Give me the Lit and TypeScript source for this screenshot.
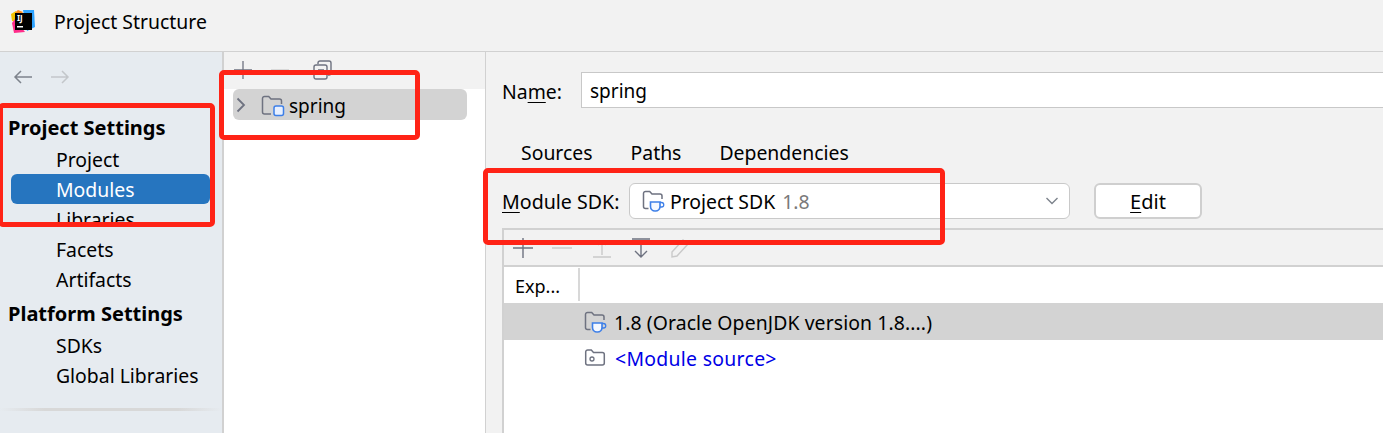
import { LitElement, html, css } from "lit";
import { customElement } from "lit/decorators.js";

const cupIcon = html`<svg class="ico" width="23" height="22" viewBox="0 0 23 22">
  <path d="M6.500 18.500H3.500a2 2 0 0 1-2-2V3.500a2 2 0 0 1 2-2h4.200l2.300 2.500h8a2 2 0 0 1 2 2V9" fill="none" stroke="#6e7280" stroke-width="1.500"/>
  <path d="M8.500 12h9.500v4.500a4.500 4.500 0 0 1-4.500 4.500h-.5a4.500 4.500 0 0 1-4.500-4.500z" fill="#f4f8ff" stroke="#3d7fe8" stroke-width="1.600"/>
  <path d="M18 12.500h1.500a1.700 1.700 0 0 1 0 4.500H18" fill="none" stroke="#3d7fe8" stroke-width="1.300"/>
</svg>`;

@customElement("app-root")
export class AppRoot extends LitElement {
  static styles = css`
    :host { display: block; width: 1383px; height: 433px; overflow: hidden; position: relative;
      font-family: "Noto Sans", "Open Sans", sans-serif; font-size: 19.4px; color: #000; background: #f2f2f2; }
    .ico { display: block; flex: none; }
    .title { height: 51px; border-bottom: 1px solid #d1d1d1; display: flex; align-items: center; padding-left: 11px; gap: 19px; }
    .title span { position: relative; top: -4px; }
    .title svg { position: relative; top: -5px; }
    .body { display: grid; grid-template-columns: 222px 2px 261px 1px 1fr; height: 381px; }
    .side { background: #e6ebf0; padding-top: 10px; display: flex; flex-direction: column; }
    .nav { display: flex; gap: 17px; padding-left: 13px; height: 32px; align-items: center; }
    .nav svg { position: relative; top: -1px; }
    .group { font-weight: 700; font-size: 20px; height: 33px; line-height: 34px; padding-left: 8px; margin-top: 3px; }
    .g1 { margin-top: 17px; }
    .item { height: 30px; line-height: 32px; padding-left: 56px; }
    .item.sel { margin: 0 12px 0 11px; padding-left: 45px; background: #2675bf; color: #fff; border-radius: 6px; }
    .sep { height: 3px; margin-top: 18px; background: linear-gradient(90deg, #e6ebf0, #d8d8d8 20%, #d8d8d8 80%, #e6ebf0); }
    .vline { background: #d1d1d1; }
    .mid { background: #fff; display: flex; flex-direction: column; }
    .midbar { height: 37px; background: #f2f2f2; display: flex; align-items: flex-start; padding: 8px 0 0 9px; box-sizing: border-box; gap: 17px; }
    .midbar .copy { margin-left: 6px; }
    .row { margin: 0 18px 0 9px; height: 31px; background: #d3d3d3; border-radius: 6px; display: flex; align-items: center; }
    .row .folder { margin-left: 12px; position: relative; top: 1px; }
    .row .label { margin-left: 4px; font-size: 19px; position: relative; top: 1px; }
    .main { padding: 20px 0 0 16px; display: flex; flex-direction: column; overflow: hidden; }
    .name { display: flex; align-items: center; height: 36px; gap: 20px; }
    .lab { width: 59px; white-space: nowrap; padding-top: 2px; }
    u { text-underline-offset: 3px; text-decoration-thickness: 1px; }
    .input { flex: 1; height: 36px; background: #fff; border: 1px solid #c8c8c8; border-right: none; box-sizing: border-box; padding: 1px 0 0 8px; line-height: 34px; font-size: 19px; }
    .tabs { display: flex; gap: 38px; height: 40px; margin: 24px 0 11px; padding-left: 19px; align-items: center; }
    .sdk { display: flex; align-items: center; height: 36px; gap: 8px; }
    .sdk-lab { white-space: nowrap; width: 119px; flex: none; font-size: 19.6px; }
    .combo { width: 441px; height: 36px; box-sizing: border-box; background: #fff; border: 1px solid #c9c9c9; border-radius: 6px; display: flex; align-items: center; padding-left: 12px; gap: 5px; }
    .combo .dim { color: #7a7a7a; margin-left: 2px; }
    .combo .chev { margin-left: auto; margin-right: 10px; }
    .edit { width: 108px; height: 36px; margin-left: 16px; box-sizing: border-box; background: #fff; border: 2px solid #cfcfcf; border-radius: 6px; display: flex; align-items: center; justify-content: center; font-size: 20px; }
    .panel { margin-top: 9px; border: solid #d1d1d1; border-width: 2px 0 0 2px; flex: 1; display: flex; flex-direction: column; }
    .tools { height: 35px; display: flex; align-items: center; padding-left: 9px; gap: 17px; border-bottom: 2px solid #d1d1d1; }
    .table { background: #fff; flex: 1; }
    .head { height: 36px; display: flex; }
    .head .c1 { width: 76px; padding-left: 11px; box-sizing: border-box; border-right: 2px solid #d8d8d8; height: 33px; margin-top: 1px; line-height: 37px; font-size: 18px; }
    .tr { height: 36px; display: flex; align-items: center; padding-left: 80px; gap: 7px; }
    .tr.on { background: #d3d3d3; height: 37px; letter-spacing: 0.1px; }
    .tr.on span { position: relative; top: 1px; }
    .tr.link { color: #0000e6; letter-spacing: 0.3px; gap: 8px; }
    .mark { position: absolute; border: 5px solid #ff2316; border-radius: 5px; box-sizing: border-box; pointer-events: none; }
    .m1 { left: -2px; top: 103px; width: 217px; height: 124px; }
    .m2 { left: 219px; top: 70px; width: 201px; height: 70px; }
    .m3 { left: 483px; top: 168px; width: 462px; height: 77px; }
  `;

  render() {
    return html`
      <div class="title">
        <svg width="24" height="24" viewBox="0 0 24 24">
          <path d="M1 6 L7 1 L12 3 L4 12z" fill="#ff8a1a"/>
          <path d="M0 5 L5 2 L4 13 L1 12z" fill="#f5c200"/>
          <path d="M12 1 L23 1 L24 18 L16 22z" fill="#2ea3ff"/>
          <path d="M1 14 L4 10 L14 23 L3 24 z" fill="#ff2d8a"/>
          <rect x="4" y="4" width="17" height="17" fill="#000"/>
          <text x="6" y="12" font-size="8" font-weight="700" fill="#fff" font-family="Noto Sans">IJ</text>
          <rect x="6" y="17" width="6" height="1.500" fill="#fff"/>
        </svg>
        <span>Project Structure</span>
      </div>
      <div class="body">
        <div class="side">
          <div class="nav">
            <svg width="20" height="16" viewBox="0 0 20 16"><path d="M19 8H2M8 2 2 8l6 6" fill="none" stroke="#7d838c" stroke-width="1.500"/></svg>
            <svg width="20" height="16" viewBox="0 0 20 16"><path d="M1 8h17M12 2l6 6-6 6" fill="none" stroke="#c3c6ca" stroke-width="1.500"/></svg>
          </div>
          <div class="group g1">Project Settings</div>
          <div class="item">Project</div>
          <div class="item sel">Modules</div>
          <div class="item">Libraries</div>
          <div class="item">Facets</div>
          <div class="item">Artifacts</div>
          <div class="group">Platform Settings</div>
          <div class="item">SDKs</div>
          <div class="item">Global Libraries</div>
          <div class="sep"></div>
        </div>
        <div class="vline"></div>
        <div class="mid">
          <div class="midbar">
            <svg width="20" height="20" viewBox="0 0 20 20"><path d="M10 1v18M1 10h18" stroke="#6e7280" stroke-width="1.300" fill="none"/></svg>
            <svg width="20" height="20" viewBox="0 0 20 20"><path d="M1 10h18" stroke="#c9c9c9" stroke-width="1.300" fill="none"/></svg>
            <svg class="copy" width="20" height="20" viewBox="0 0 20 20"><rect x="1" y="5" width="13" height="14" rx="2" fill="none" stroke="#6e7280" stroke-width="1.400"/><path d="M5 4V3a2 2 0 0 1 2-2h9a2 2 0 0 1 2 2v10a2 2 0 0 1-2 2h-1" fill="none" stroke="#6e7280" stroke-width="1.400"/><path d="M5 10h6M5 13h6" stroke="#6e7280" stroke-width="1.400"/></svg>
          </div>
          <div class="row">
            <svg width="16" height="16" viewBox="0 0 16 16"><path d="M4.500 1.500 11 8l-6.500 6.500" fill="none" stroke="#6e7280" stroke-width="1.800"/></svg>
            <svg class="ico folder" width="24" height="22" viewBox="0 0 24 22">
              <path d="M10 19H3.500a2 2 0 0 1-2-2V3.500a2 2 0 0 1 2-2h4.200l2.300 2.500h8.500a2 2 0 0 1 2 2V9" fill="none" stroke="#6e7280" stroke-width="1.500"/>
              <rect x="13" y="11" width="9.500" height="9.500" rx="2" fill="#e8f0ff" stroke="#3d7fe8" stroke-width="1.500"/>
            </svg>
            <span class="label">spring</span>
          </div>
        </div>
        <div class="vline"></div>
        <div class="main">
          <div class="name">
            <span class="lab">Na<u>m</u>e:</span>
            <div class="input">spring</div>
          </div>
          <div class="tabs"><span>Sources</span><span>Paths</span><span>Dependencies</span></div>
          <div class="sdk">
            <span class="sdk-lab"><u>M</u>odule SDK:</span>
            <div class="combo">
              ${cupIcon}
              <span>Project SDK <span class="dim">1.8</span></span>
              <svg class="chev" width="14" height="10" viewBox="0 0 14 10"><path d="M1.500 2 7 7.500 12.500 2" fill="none" stroke="#7d838c" stroke-width="1.400"/></svg>
            </div>
            <div class="edit"><span><u>E</u>dit</span></div>
          </div>
          <div class="panel">
            <div class="tools">
              <svg width="22" height="22" viewBox="0 0 22 22"><path d="M10 1v20M0 11h20" stroke="#6e7280" stroke-width="1.400" fill="none"/></svg>
              <svg width="22" height="22" viewBox="0 0 22 22"><path d="M0 11h20" stroke="#c9c9c9" stroke-width="1.400" fill="none"/></svg>
              <svg width="22" height="22" viewBox="0 0 22 22"><path d="M2 20h18M11 18V4M7 8l4-4 4 4" stroke="#c9c9c9" stroke-width="1.400" fill="none"/></svg>
              <svg width="22" height="22" viewBox="0 0 22 22"><path d="M2 2h18M11 4v16M5 14l6 6 6-6" stroke="#6e7280" stroke-width="1.400" fill="none"/></svg>
              <svg width="22" height="22" viewBox="0 0 22 22"><path d="M3 15 14 3l5 4L8 19l-5 1z" stroke="#c9c9c9" stroke-width="1.400" fill="none"/></svg>
            </div>
            <div class="table">
              <div class="head"><div class="c1">Exp...</div></div>
              <div class="tr on">${cupIcon}<span>1.8 (Oracle OpenJDK version 1.8....)</span></div>
              <div class="tr link">
                <svg class="ico" width="23" height="20" viewBox="0 0 23 20"><path d="M1.700 15V4a2 2 0 0 1 2-2h3.600l2.200 2.400h8.800a2 2 0 0 1 2 2V15a2 2 0 0 1-2 2H3.700a2 2 0 0 1-2-2z" fill="none" stroke="#6e7280" stroke-width="1.500"/><circle cx="8" cy="11" r="2" fill="none" stroke="#6e7280" stroke-width="1.300"/></svg>
                <span>&lt;Module source&gt;</span>
              </div>
            </div>
          </div>
        </div>
      </div>
      <div class="mark m1"></div>
      <div class="mark m2"></div>
      <div class="mark m3"></div>
    `;
  }
}
